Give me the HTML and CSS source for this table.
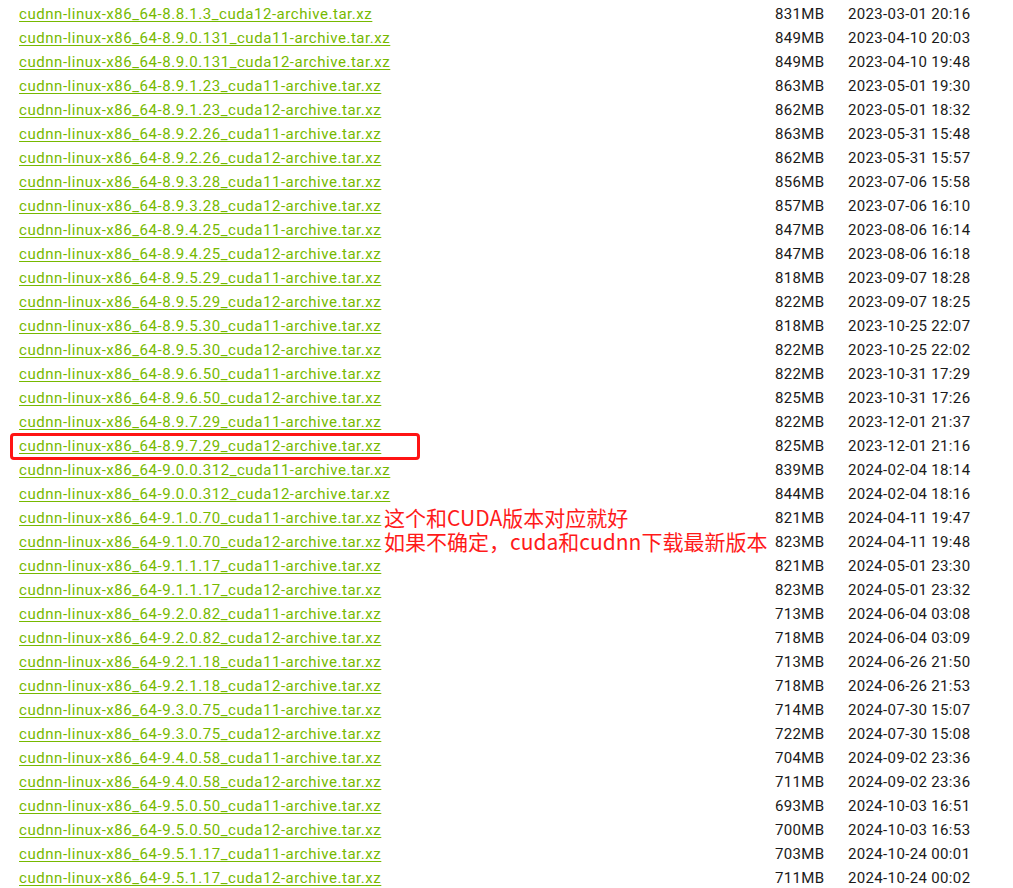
FILE: index.html
```html
<!DOCTYPE html>
<html lang="zh-CN">
<head>
	<meta charset="UTF-8">
	<title>cudnn archive</title>
	<link rel="stylesheet" href="styles.css">
</head>
<body>
	<div id="list">
		<div class="row"><a href="javascript:;">cudnn-linux-x86_64-8.8.1.3_cuda12-archive.tar.xz</a><span class="size">831MB</span><span class="date">2023-03-01 20:16</span></div>
		<div class="row"><a href="javascript:;">cudnn-linux-x86_64-8.9.0.131_cuda11-archive.tar.xz</a><span class="size">849MB</span><span class="date">2023-04-10 20:03</span></div>
		<div class="row"><a href="javascript:;">cudnn-linux-x86_64-8.9.0.131_cuda12-archive.tar.xz</a><span class="size">849MB</span><span class="date">2023-04-10 19:48</span></div>
		<div class="row"><a href="javascript:;">cudnn-linux-x86_64-8.9.1.23_cuda11-archive.tar.xz</a><span class="size">863MB</span><span class="date">2023-05-01 19:30</span></div>
		<div class="row"><a href="javascript:;">cudnn-linux-x86_64-8.9.1.23_cuda12-archive.tar.xz</a><span class="size">862MB</span><span class="date">2023-05-01 18:32</span></div>
		<div class="row"><a href="javascript:;">cudnn-linux-x86_64-8.9.2.26_cuda11-archive.tar.xz</a><span class="size">863MB</span><span class="date">2023-05-31 15:48</span></div>
		<div class="row"><a href="javascript:;">cudnn-linux-x86_64-8.9.2.26_cuda12-archive.tar.xz</a><span class="size">862MB</span><span class="date">2023-05-31 15:57</span></div>
		<div class="row"><a href="javascript:;">cudnn-linux-x86_64-8.9.3.28_cuda11-archive.tar.xz</a><span class="size">856MB</span><span class="date">2023-07-06 15:58</span></div>
		<div class="row"><a href="javascript:;">cudnn-linux-x86_64-8.9.3.28_cuda12-archive.tar.xz</a><span class="size">857MB</span><span class="date">2023-07-06 16:10</span></div>
		<div class="row"><a href="javascript:;">cudnn-linux-x86_64-8.9.4.25_cuda11-archive.tar.xz</a><span class="size">847MB</span><span class="date">2023-08-06 16:14</span></div>
		<div class="row"><a href="javascript:;">cudnn-linux-x86_64-8.9.4.25_cuda12-archive.tar.xz</a><span class="size">847MB</span><span class="date">2023-08-06 16:18</span></div>
		<div class="row"><a href="javascript:;">cudnn-linux-x86_64-8.9.5.29_cuda11-archive.tar.xz</a><span class="size">818MB</span><span class="date">2023-09-07 18:28</span></div>
		<div class="row"><a href="javascript:;">cudnn-linux-x86_64-8.9.5.29_cuda12-archive.tar.xz</a><span class="size">822MB</span><span class="date">2023-09-07 18:25</span></div>
		<div class="row"><a href="javascript:;">cudnn-linux-x86_64-8.9.5.30_cuda11-archive.tar.xz</a><span class="size">818MB</span><span class="date">2023-10-25 22:07</span></div>
		<div class="row"><a href="javascript:;">cudnn-linux-x86_64-8.9.5.30_cuda12-archive.tar.xz</a><span class="size">822MB</span><span class="date">2023-10-25 22:02</span></div>
		<div class="row"><a href="javascript:;">cudnn-linux-x86_64-8.9.6.50_cuda11-archive.tar.xz</a><span class="size">822MB</span><span class="date">2023-10-31 17:29</span></div>
		<div class="row"><a href="javascript:;">cudnn-linux-x86_64-8.9.6.50_cuda12-archive.tar.xz</a><span class="size">825MB</span><span class="date">2023-10-31 17:26</span></div>
		<div class="row"><a href="javascript:;">cudnn-linux-x86_64-8.9.7.29_cuda11-archive.tar.xz</a><span class="size">822MB</span><span class="date">2023-12-01 21:37</span></div>
		<div class="row marked"><a href="javascript:;">cudnn-linux-x86_64-8.9.7.29_cuda12-archive.tar.xz</a><span class="size">825MB</span><span class="date">2023-12-01 21:16</span></div>
		<div class="row"><a href="javascript:;">cudnn-linux-x86_64-9.0.0.312_cuda11-archive.tar.xz</a><span class="size">839MB</span><span class="date">2024-02-04 18:14</span></div>
		<div class="row"><a href="javascript:;">cudnn-linux-x86_64-9.0.0.312_cuda12-archive.tar.xz</a><span class="size">844MB</span><span class="date">2024-02-04 18:16</span></div>
		<div class="row noted"><a href="javascript:;">cudnn-linux-x86_64-9.1.0.70_cuda11-archive.tar.xz</a><span class="size">821MB</span><span class="date">2024-04-11 19:47</span>
			<div class="note">这个和CUDA版本对应就好<br>如果不确定，cuda和cudnn下载最新版本</div>
		</div>
		<div class="row"><a href="javascript:;">cudnn-linux-x86_64-9.1.0.70_cuda12-archive.tar.xz</a><span class="size">823MB</span><span class="date">2024-04-11 19:48</span></div>
		<div class="row"><a href="javascript:;">cudnn-linux-x86_64-9.1.1.17_cuda11-archive.tar.xz</a><span class="size">821MB</span><span class="date">2024-05-01 23:30</span></div>
		<div class="row"><a href="javascript:;">cudnn-linux-x86_64-9.1.1.17_cuda12-archive.tar.xz</a><span class="size">823MB</span><span class="date">2024-05-01 23:32</span></div>
		<div class="row"><a href="javascript:;">cudnn-linux-x86_64-9.2.0.82_cuda11-archive.tar.xz</a><span class="size">713MB</span><span class="date">2024-06-04 03:08</span></div>
		<div class="row"><a href="javascript:;">cudnn-linux-x86_64-9.2.0.82_cuda12-archive.tar.xz</a><span class="size">718MB</span><span class="date">2024-06-04 03:09</span></div>
		<div class="row"><a href="javascript:;">cudnn-linux-x86_64-9.2.1.18_cuda11-archive.tar.xz</a><span class="size">713MB</span><span class="date">2024-06-26 21:50</span></div>
		<div class="row"><a href="javascript:;">cudnn-linux-x86_64-9.2.1.18_cuda12-archive.tar.xz</a><span class="size">718MB</span><span class="date">2024-06-26 21:53</span></div>
		<div class="row"><a href="javascript:;">cudnn-linux-x86_64-9.3.0.75_cuda11-archive.tar.xz</a><span class="size">714MB</span><span class="date">2024-07-30 15:07</span></div>
		<div class="row"><a href="javascript:;">cudnn-linux-x86_64-9.3.0.75_cuda12-archive.tar.xz</a><span class="size">722MB</span><span class="date">2024-07-30 15:08</span></div>
		<div class="row"><a href="javascript:;">cudnn-linux-x86_64-9.4.0.58_cuda11-archive.tar.xz</a><span class="size">704MB</span><span class="date">2024-09-02 23:36</span></div>
		<div class="row"><a href="javascript:;">cudnn-linux-x86_64-9.4.0.58_cuda12-archive.tar.xz</a><span class="size">711MB</span><span class="date">2024-09-02 23:36</span></div>
		<div class="row"><a href="javascript:;">cudnn-linux-x86_64-9.5.0.50_cuda11-archive.tar.xz</a><span class="size">693MB</span><span class="date">2024-10-03 16:51</span></div>
		<div class="row"><a href="javascript:;">cudnn-linux-x86_64-9.5.0.50_cuda12-archive.tar.xz</a><span class="size">700MB</span><span class="date">2024-10-03 16:53</span></div>
		<div class="row"><a href="javascript:;">cudnn-linux-x86_64-9.5.1.17_cuda11-archive.tar.xz</a><span class="size">703MB</span><span class="date">2024-10-24 00:01</span></div>
		<div class="row"><a href="javascript:;">cudnn-linux-x86_64-9.5.1.17_cuda12-archive.tar.xz</a><span class="size">711MB</span><span class="date">2024-10-24 00:02</span></div>
	</div>
</body>
</html>
```

FILE: styles.css
```css
*{padding: 0; margin: 0;}
body{background: #fff; font-family: Roboto, "Liberation Sans", sans-serif; font-size: 15px; letter-spacing: 0.35px; color: #1a1a1a;}
#list{padding: 2px 0 0 19px;}
#list .row{display: grid; grid-template-columns: 756px 73px auto; height: 24px; line-height: 24px; position: relative;}
#list a{color: #76b900; letter-spacing: 0.55px; text-decoration: underline; text-underline-offset: 2px; white-space: nowrap; justify-self: start;}
#list .marked::before{
	content: ""; position: absolute; left: -9px; top: -1px; width: 404px; height: 21px;
	border: 3px solid #ff1414; border-radius: 4px;
}
#list .note{
	position: absolute; left: 365px; top: -1px; white-space: nowrap; letter-spacing: 0;
	font-family: "Noto Sans CJK SC", sans-serif; font-size: 21px; line-height: 24px; color: #ff1a1a;
}
```
